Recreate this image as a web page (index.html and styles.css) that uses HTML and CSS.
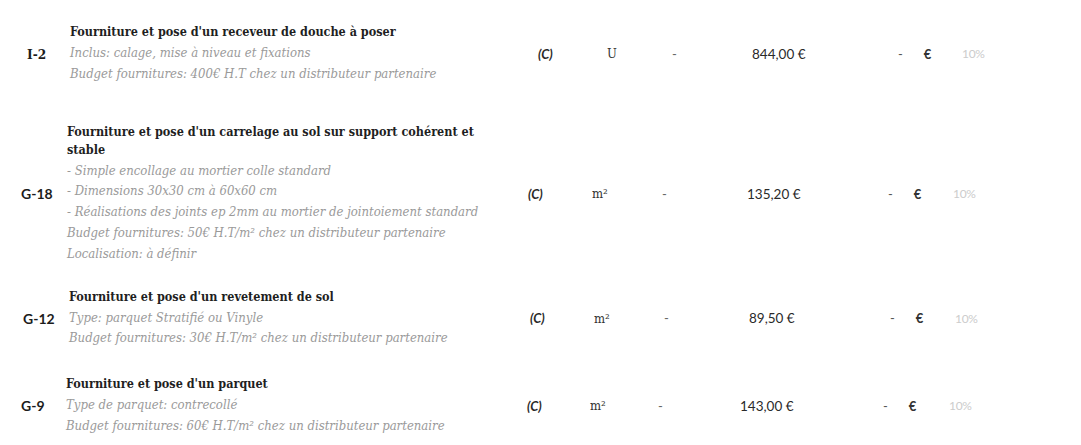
FILE: index.html
```html
<!DOCTYPE html>
<html lang="fr">
<head>
<meta charset="utf-8">
<title>Devis</title>
<link rel="stylesheet" href="styles.css">
</head>
<body>
<div class="list">
  <div class="row r1">
    <div class="code serif">I-2</div>
    <div class="desc">
      <div class="title">Fourniture et pose d'un receveur de douche à poser</div>
      <div class="note">Inclus: calage, mise à niveau et fixations</div>
      <div class="note">Budget fournitures: 400€ H.T chez un distributeur partenaire</div>
    </div>
    <div class="c">(C)</div>
    <div class="unit">U</div>
    <div class="dash">-</div>
    <div class="price">844,00 €</div>
    <div class="tot"><span class="d">-</span><span class="e">€</span></div>
    <div class="pct">10%</div>
  </div>

  <div class="row r2">
    <div class="code">G-18</div>
    <div class="desc">
      <div class="title">Fourniture et pose d'un carrelage au sol sur support cohérent et stable</div>
      <div class="note">- Simple encollage au mortier colle standard</div>
      <div class="note">- Dimensions 30x30 cm à 60x60 cm</div>
      <div class="note">- Réalisations des joints ep 2mm au mortier de jointoiement standard</div>
      <div class="note">Budget fournitures: 50€ H.T/m² chez un distributeur partenaire</div>
      <div class="note">Localisation: à définir</div>
    </div>
    <div class="c">(C)</div>
    <div class="unit">m²</div>
    <div class="dash">-</div>
    <div class="price">135,20 €</div>
    <div class="tot"><span class="d">-</span><span class="e">€</span></div>
    <div class="pct">10%</div>
  </div>

  <div class="row r3">
    <div class="code">G-12</div>
    <div class="desc">
      <div class="title">Fourniture et pose d'un revetement de sol</div>
      <div class="note">Type: parquet Stratifié ou Vinyle</div>
      <div class="note">Budget fournitures: 30€ H.T/m² chez un distributeur partenaire</div>
    </div>
    <div class="c">(C)</div>
    <div class="unit">m²</div>
    <div class="dash">-</div>
    <div class="price">89,50 €</div>
    <div class="tot"><span class="d">-</span><span class="e">€</span></div>
    <div class="pct">10%</div>
  </div>

  <div class="row r4">
    <div class="code">G-9</div>
    <div class="desc">
      <div class="title">Fourniture et pose d'un parquet</div>
      <div class="note">Type de parquet: contrecollé</div>
      <div class="note">Budget fournitures: 60€ H.T/m² chez un distributeur partenaire</div>
    </div>
    <div class="c">(C)</div>
    <div class="unit">m²</div>
    <div class="dash">-</div>
    <div class="price">143,00 €</div>
    <div class="tot"><span class="d">-</span><span class="e">€</span></div>
    <div class="pct">10%</div>
  </div>
</div>
</body>
</html>
```

FILE: styles.css
```css
html, body {
  margin: 0;
  padding: 0;
  background: #ffffff;
}

body {
  font-family: Lato, "Noto Sans", sans-serif;
  color: #222;
}

.list {
  display: flex;
  flex-direction: column;
  padding-top: 23px;
}

.row {
  display: grid;
  grid-template-columns: 67px 461px 64px 70px 85px 141px 65px 60px;
  align-items: center;
}

.r1 { grid-template-columns: 70px 468px 69px 65px 80px 146px 64px 60px; }
.r2 { margin-top: 38px; }
.r3 { margin-top: 23px; padding-left: 2px; }
.r4 { margin-top: 26px; grid-template-columns: 66px 461px 63px 68px 82px 143px 66px 60px; }

.code {
  font-weight: 700;
  font-size: 14px;
  color: #1c1c1c;
  padding-left: 21px;
}

.code.serif {
  font-family: "DejaVu Serif Condensed", "DejaVu Serif", serif;
  font-size: 13.5px;
  padding-left: 27px;
}

.desc {
  font-family: "DejaVu Serif Condensed", "DejaVu Serif", serif;
  max-width: 420px;
}

.title {
  font-weight: 700;
  font-size: 12.5px;
  line-height: 18px;
  color: #1f1f1f;
  margin-bottom: 2px;
}

.note {
  font-style: italic;
  font-size: 13px;
  line-height: 20.8px;
  color: #9a9a9a;
}

.c {
  font-style: italic;
  font-weight: 700;
  font-size: 13px;
  color: #2a2a2a;
}

.unit {
  font-family: "DejaVu Serif Condensed", "DejaVu Serif", serif;
  font-size: 13px;
  color: #333;
}

.dash {
  font-size: 13px;
  color: #666;
}

.price {
  font-size: 13.5px;
  color: #2a2a2a;
}

.tot {
  display: flex;
  gap: 21px;
  font-size: 13px;
  color: #2a2a2a;
}

.tot .d { color: #555; }
.tot .e { font-weight: 700; color: #333; }

.pct {
  font-size: 12px;
  color: #cccccc;
  letter-spacing: -0.3px;
}
```
